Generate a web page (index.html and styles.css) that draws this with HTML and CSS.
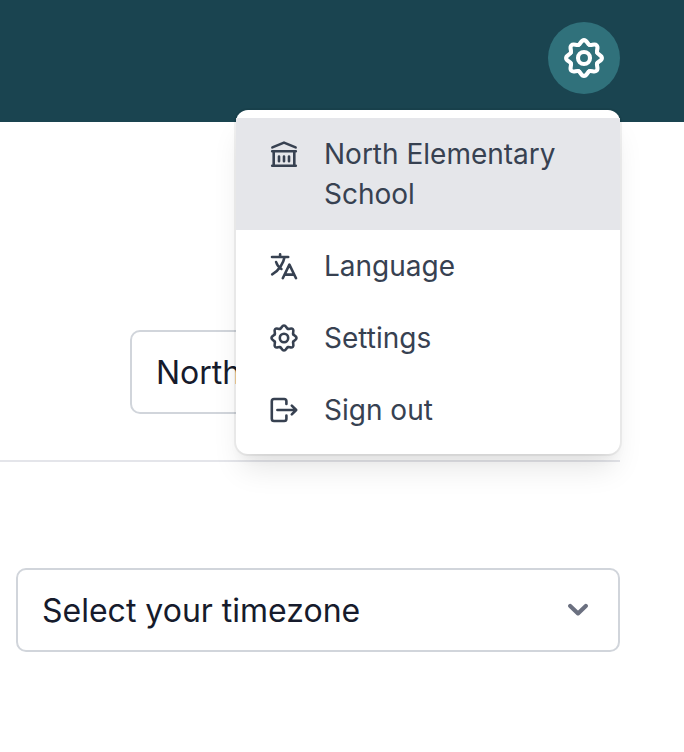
FILE: index.html
```
<!DOCTYPE html>
<html lang="en">
<head>
<meta charset="utf-8">
<title>Settings</title>
<link rel="stylesheet" href="styles.css">
</head>
<body>
<svg class="defs" aria-hidden="true">
  <defs>
    <path id="tooth" d="M-5.43 -13.12C-3.2 -14.05 -3.1 -17.9 0 -17.9S3.2 -14.05 5.43 -13.12"/>
    <symbol id="gear" viewBox="-20 -20 40 40">
      <use href="#tooth"/>
      <use href="#tooth" transform="rotate(45)"/>
      <use href="#tooth" transform="rotate(90)"/>
      <use href="#tooth" transform="rotate(135)"/>
      <use href="#tooth" transform="rotate(180)"/>
      <use href="#tooth" transform="rotate(225)"/>
      <use href="#tooth" transform="rotate(270)"/>
      <use href="#tooth" transform="rotate(315)"/>
      <circle r="6"/>
    </symbol>
  </defs>
</svg>
<header class="topbar">
  <div class="account">
    <button class="gear-button" aria-label="Account menu"><svg class="gear-large"><use href="#gear"/></svg></button>
    <nav class="menu">
      <a class="item active">
        <svg class="icon" viewBox="0 0 32 32"><path d="M4.4 9.4 16 4.6 27.6 9.4M4.2 13.2H27.8M5.7 13.2V27.8M26.3 13.2V27.8M4.2 27.8H27.8M11 18.6V23.2M16 18.6V23.2M21 18.6V23.2"/></svg>
        <span>North Elementary School</span>
      </a>
      <a class="item">
        <svg class="icon" viewBox="0 0 32 32"><path d="M4 7H20.2M12.1 4.2V7M16.6 7C15.5 12.5 11.5 20.5 4.2 24.4M8.1 12C9 15 10.7 17.4 13.4 19M14.8 28.2 21.4 14.6 28 28.2M17 24.6H25.8"/></svg>
        <span>Language</span>
      </a>
      <a class="item">
        <span class="icon-slot"><svg class="gear-small"><use href="#gear"/></svg></span>
        <span>Settings</span>
      </a>
      <a class="item">
        <svg class="icon" viewBox="0 0 32 32"><path d="M18.4 10V7.2Q18.4 5 16.2 5H6Q3.8 5 3.8 7.2V24.8Q3.8 27 6 27H16.2Q18.4 27 18.4 24.8V21.6M9.4 16H28M23.8 11.6 28.2 16 23.8 20.4"/></svg>
        <span>Sign out</span>
      </a>
    </nav>
  </div>
</header>
<main class="content">
  <div class="row">
    <div class="select school">North Elementary</div>
  </div>
  <div class="select timezone">
    <span>Select your timezone</span>
    <svg class="chevron" viewBox="0 0 20 14"><path d="M2.2 3 10 10.4 17.8 3"/></svg>
  </div>
</main>
</body>
</html>
```

FILE: styles.css
```
* { box-sizing: border-box; }
body {
  margin: 0;
  height: 752px;
  overflow: hidden;
  background: #fff;
  color: #161b2c;
  font-family: Inter, "Liberation Sans", sans-serif;
}
svg {
  display: block;
  flex: none;
  fill: none;
  stroke: currentColor;
  stroke-linecap: round;
  stroke-linejoin: round;
}
.defs { position: absolute; width: 0; height: 0; }
.topbar {
  display: flex;
  justify-content: flex-end;
  height: 122px;
  padding: 22px 64px 0 0;
  background: #1a4450;
}
.account { position: relative; }
.gear-button {
  display: flex;
  align-items: center;
  justify-content: center;
  width: 72px;
  height: 72px;
  padding: 0;
  border: 0;
  border-radius: 50%;
  background: #30717b;
  color: #fff;
}
.gear-large { width: 40px; height: 40px; stroke-width: 4.1; }
.menu {
  position: absolute;
  z-index: 1;
  top: 88px;
  right: 0;
  width: 384px;
  padding: 8px 0;
  border-radius: 12px;
  background: #fff;
  box-shadow: 0 0 0 2px rgba(0, 0, 0, .05), 0 20px 30px -6px rgba(0, 0, 0, .1), 0 8px 12px -4px rgba(0, 0, 0, .05);
}
.item {
  display: flex;
  gap: 24px;
  padding: 16px 32px;
  color: #374151;
  font-size: 28px;
  line-height: 40px;
}
.active { background: #e5e6ea; }
.icon { width: 32px; height: 32px; margin-top: 4px; stroke-width: 2.6; }
.icon-slot {
  display: flex;
  align-items: center;
  justify-content: center;
  width: 32px;
  height: 40px;
}
.gear-small { width: 28px; height: 28px; stroke-width: 3.7; }
.content { padding-right: 64px; }
.row {
  height: 340px;
  padding: 208px 0 0 130px;
  border-bottom: 2px solid #e4e5ea;
}
.select {
  display: flex;
  align-items: center;
  height: 84px;
  padding: 2px 24px 0;
  border: 2px solid #d1d5db;
  border-radius: 10px;
  font-size: 32px;
  line-height: 48px;
  white-space: nowrap;
}
.timezone {
  justify-content: space-between;
  margin: 106px 0 0 16px;
  padding-right: 30px;
}
.chevron { width: 20px; height: 14px; margin-bottom: 2px; color: #6b7080; stroke-width: 4.2; }
```
